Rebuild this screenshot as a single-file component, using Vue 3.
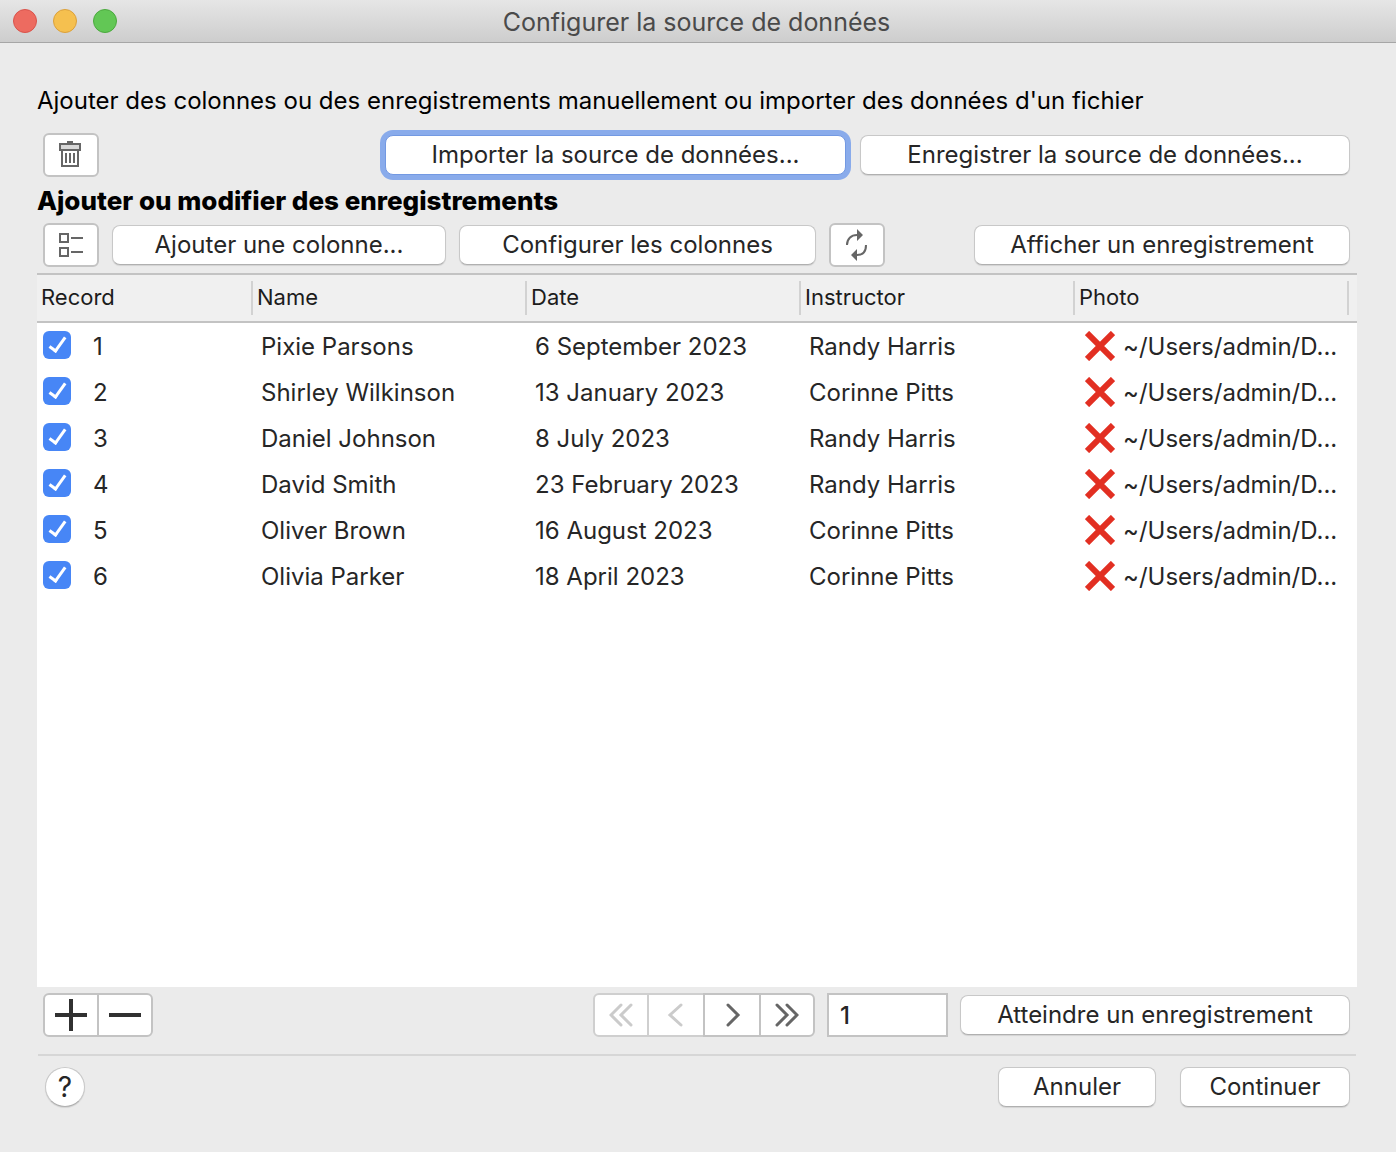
<script setup>
import { ref } from 'vue'

const columns = ['Name', 'Date', 'Instructor', 'Photo']
const path = '~/Users/admin/D...'
const records = ref([
  { id: 1, on: true, name: 'Pixie Parsons', date: '6 September 2023', instructor: 'Randy Harris' },
  { id: 2, on: true, name: 'Shirley Wilkinson', date: '13 January 2023', instructor: 'Corinne Pitts' },
  { id: 3, on: true, name: 'Daniel Johnson', date: '8 July 2023', instructor: 'Randy Harris' },
  { id: 4, on: true, name: 'David Smith', date: '23 February 2023', instructor: 'Randy Harris' },
  { id: 5, on: true, name: 'Oliver Brown', date: '16 August 2023', instructor: 'Corinne Pitts' },
  { id: 6, on: true, name: 'Olivia Parker', date: '18 April 2023', instructor: 'Corinne Pitts' }
])
const current = ref('1')
</script>

<template>
  <div class="window">
    <header class="titlebar">
      <div class="lights">
        <button class="light close" aria-label="Fermer"></button>
        <button class="light minimize" aria-label="Réduire"></button>
        <button class="light zoom" aria-label="Agrandir"></button>
      </div>
      <h1 class="title">Configurer la source de données</h1>
    </header>

    <main class="content">
      <p class="intro">Ajouter des colonnes ou des enregistrements manuellement ou importer des données d'un fichier</p>

      <div class="toolbar source">
        <button class="square" aria-label="Supprimer">
          <svg width="28" height="28" viewBox="0 0 28 28" fill="none" stroke="#666" stroke-width="2">
            <path d="M10 1h6" />
            <path d="M5 9v16h16V9" />
            <rect x="3" y="3" width="20" height="6" fill="#d8d8d8" />
            <path d="M9 12v10M13 12v10M17 12v10" />
          </svg>
        </button>
        <button class="push import">Importer la source de données...</button>
        <button class="push save">Enregistrer la source de données...</button>
      </div>

      <h2 class="subtitle">Ajouter ou modifier des enregistrements</h2>

      <div class="toolbar">
        <button class="square" aria-label="Liste des champs">
          <svg width="28" height="28" viewBox="0 0 28 28" fill="none" stroke="#666" stroke-width="2">
            <rect x="3" y="3" width="8" height="8" />
            <rect x="3" y="17" width="8" height="8" />
            <path d="M14 7h12M14 21h12" />
          </svg>
        </button>
        <button class="push add">Ajouter une colonne...</button>
        <button class="push configure">Configurer les colonnes</button>
        <button class="square" aria-label="Actualiser">
          <svg width="28" height="34" viewBox="0 0 28 34" fill="none" stroke="#666" stroke-width="2">
            <path d="M4 17C4 11 8 7 14 7" />
            <path d="M23 17C23 23 20 27 14 27" />
            <path d="M14 1l6 6l-6 6zM14 33l-6-6l6-6z" fill="#666" stroke="none" />
          </svg>
        </button>
        <button class="push show">Afficher un enregistrement</button>
      </div>

      <div class="grid">
        <table>
          <colgroup>
            <col class="col-record" />
            <col v-for="c in columns" :key="c" />
            <col class="col-end" />
          </colgroup>
          <thead>
            <tr>
              <th scope="col"><span class="head">Record</span></th>
              <th v-for="c in columns" :key="c" scope="col"><span class="head">{{ c }}</span></th>
              <td></td>
            </tr>
          </thead>
          <tbody>
            <tr v-for="r in records" :key="r.id">
              <td>
                <label class="record">
                  <input v-model="r.on" type="checkbox" class="check" />
                  <span>{{ r.id }}</span>
                </label>
              </td>
              <td>{{ r.name }}</td>
              <td>{{ r.date }}</td>
              <td>{{ r.instructor }}</td>
              <td>
                <span class="photo">
                  <svg width="30" height="30" viewBox="0 0 30 30" stroke="#e22f22" stroke-width="6">
                    <path d="M2 2l26 26M28 2L2 28" />
                  </svg>
                  {{ path }}
                </span>
              </td>
              <td></td>
            </tr>
          </tbody>
        </table>
      </div>

      <div class="toolbar pager">
        <div class="segments">
          <button class="segment" aria-label="Ajouter">
            <svg width="32" height="32" viewBox="0 0 32 32" stroke="#313131" stroke-width="4"><path d="M0 16h32M16 0v32" /></svg>
          </button>
          <button class="segment" aria-label="Retirer">
            <svg width="32" height="32" viewBox="0 0 32 32" stroke="#313131" stroke-width="4"><path d="M0 16h32" /></svg>
          </button>
        </div>
        <div class="segments nav">
          <button class="segment" disabled aria-label="Premier">
            <svg class="chevron" width="24" height="24" viewBox="0 0 24 24"><path d="M12 2L2 12l10 10M22 2L12 12l10 10" /></svg>
          </button>
          <button class="segment middle" disabled aria-label="Précédent">
            <svg class="chevron" width="24" height="24" viewBox="0 0 24 24"><path d="M17 2L6 12l11 10" /></svg>
          </button>
          <button class="segment middle" aria-label="Suivant">
            <svg class="chevron" width="24" height="24" viewBox="0 0 24 24"><path d="M8 2l10 10L8 22" /></svg>
          </button>
          <button class="segment" aria-label="Dernier">
            <svg class="chevron" width="24" height="24" viewBox="0 0 24 24"><path d="M2 2l10 10L2 22M12 2l10 10l-10 10" /></svg>
          </button>
        </div>
        <input v-model="current" class="number" type="text" aria-label="Numéro d'enregistrement" />
        <button class="push go">Atteindre un enregistrement</button>
      </div>

      <hr class="rule" />

      <footer class="toolbar footer">
        <button class="help" aria-label="Aide">?</button>
        <button class="push cancel">Annuler</button>
        <button class="push continue">Continuer</button>
      </footer>
    </main>
  </div>
</template>

<style>
body {
  margin: 0;
  background: #ebebeb;
}
</style>

<style scoped>
.window {
  display: flex;
  flex-direction: column;
  min-height: 100vh;
  box-sizing: border-box;
  background: #ebebeb;
  color: #262626;
  font: 24px/32px Inter, "Liberation Sans", sans-serif;
}
button,
input {
  box-sizing: border-box;
  margin: 0;
  padding: 0;
  color: inherit;
  font: inherit;
}
svg {
  display: block;
  flex: none;
}
.titlebar {
  display: grid;
  grid-template-columns: 1fr auto 1fr;
  align-items: center;
  height: 43px;
  box-sizing: border-box;
  padding: 0 16px 0 13px;
  border-bottom: 1px solid #a6a6a6;
  background: linear-gradient(#e6e6e6, #cdcdcd);
}
.lights {
  display: flex;
  gap: 16px;
}
.light {
  width: 24px;
  height: 24px;
  border: 1px solid;
  border-radius: 50%;
}
.close {
  border-color: #d9534b;
  background: #ed6b60;
}
.minimize {
  border-color: #dba03b;
  background: #f5c04f;
}
.zoom {
  border-color: #4ba93e;
  background: #62c755;
}
.title {
  margin: 0;
  padding-top: 2px;
  color: #4a4a4a;
  font-size: 25px;
  font-weight: 400;
}
.content {
  display: flex;
  flex: 1;
  flex-direction: column;
  padding: 42px 39px 45px 37px;
}
.intro,
.subtitle {
  margin: 0;
  color: #000;
}
.intro {
  margin-bottom: 16px;
}
.subtitle {
  margin: 8px 0 6px;
  font-size: 26px;
  font-weight: 800;
}
.toolbar {
  display: flex;
  align-items: center;
  gap: 13px;
  padding: 0 7px 0 6px;
}
.source {
  gap: 14px;
}
.push {
  height: 40px;
  border: 1px solid #c8c8c8;
  border-bottom-color: #b0b0b0;
  border-radius: 8px;
  background: #fff;
  box-shadow: 0 1px 1px rgba(0, 0, 0, 0.1);
  white-space: nowrap;
}
.import {
  width: 461px;
  margin-left: auto;
  border-color: #7399e2;
  box-shadow: 0 0 0 5px #89abeb;
}
.save {
  width: 490px;
}
.add {
  width: 334px;
}
.configure {
  width: 357px;
}
.show {
  width: 376px;
  margin-left: auto;
}
.go {
  width: 390px;
}
.cancel {
  width: 158px;
  margin-left: auto;
}
.continue {
  width: 170px;
}
.square {
  display: flex;
  align-items: center;
  justify-content: center;
  width: 56px;
  height: 44px;
  border: 2px solid #c3c3c3;
  border-radius: 6px;
  background: #fff;
}
.grid {
  flex: 1;
  margin: 6px 0;
  background: #fff;
}
table {
  width: 100%;
  table-layout: fixed;
  border-spacing: 0;
}
.col-record {
  width: 216px;
}
.col-end {
  width: 8px;
}
th,
td {
  padding: 0;
  text-align: left;
  white-space: nowrap;
}
thead th,
thead td {
  height: 46px;
  border-top: 2px solid #c3c3c3;
  border-bottom: 2px solid #c3c3c3;
  background: #f0f0f0;
  color: #1c1c1c;
  font-size: 22px;
  font-weight: 400;
}
.head {
  display: block;
  padding: 0 0 2px 4px;
  border-right: 2px solid #d2d2d2;
  line-height: 32px;
}
tbody td {
  height: 44px;
  padding: 2px 0 0 8px;
}
tbody td:first-child {
  padding-left: 6px;
}
tbody td:last-child {
  padding-left: 0;
}
.record {
  display: flex;
  align-items: center;
  gap: 22px;
}
.check {
  display: grid;
  place-items: center;
  width: 28px;
  height: 28px;
  margin-bottom: 4px;
  border-radius: 6px;
  background: #fff;
  box-shadow: inset 0 0 0 1px #b8b8b8;
  appearance: none;
}
.check:checked {
  background: #4786f6;
  box-shadow: none;
}
.check:checked::before {
  width: 6px;
  height: 15px;
  margin-bottom: 4px;
  border: solid #fff;
  border-width: 0 3px 3px 0;
  content: "";
  transform: rotate(36deg);
}
.photo {
  display: flex;
  align-items: center;
  gap: 8px;
  padding-left: 2px;
}
.photo svg {
  margin-bottom: 2px;
}
.segments {
  display: flex;
}
.segment {
  display: flex;
  align-items: center;
  justify-content: center;
  width: 56px;
  height: 44px;
  border: 2px solid #c3c3c3;
  background: #fff;
}
.segment + .segment {
  margin-left: -2px;
}
.segment:first-child {
  border-radius: 6px 0 0 6px;
}
.segment:last-child {
  border-radius: 0 6px 6px 0;
}
.middle {
  width: 58px;
}
.segment:disabled {
  border-color: #cfcfcf;
}
.chevron {
  fill: none;
  stroke: #666;
  stroke-width: 3;
  stroke-linecap: round;
}
.segment:disabled .chevron {
  stroke: #cbcbcb;
}
.pager {
  gap: 12px;
}
.nav {
  margin-left: auto;
}
.number {
  width: 121px;
  height: 44px;
  padding-left: 11px;
  border: 2px solid #c3c3c3;
  border-radius: 0;
  background: #fff;
  font-weight: 500;
}
.rule {
  align-self: stretch;
  height: 2px;
  margin: 17px 1px 11px;
  border: 0;
  background: #d6d6d6;
}
.footer {
  gap: 24px;
  padding-left: 8px;
}
.help {
  width: 40px;
  height: 40px;
  border: 1px solid #c8c8c8;
  border-bottom-color: #b0b0b0;
  border-radius: 50%;
  background: #fff;
  box-shadow: 0 1px 1px rgba(0, 0, 0, 0.1);
  font-size: 28px;
}
</style>
